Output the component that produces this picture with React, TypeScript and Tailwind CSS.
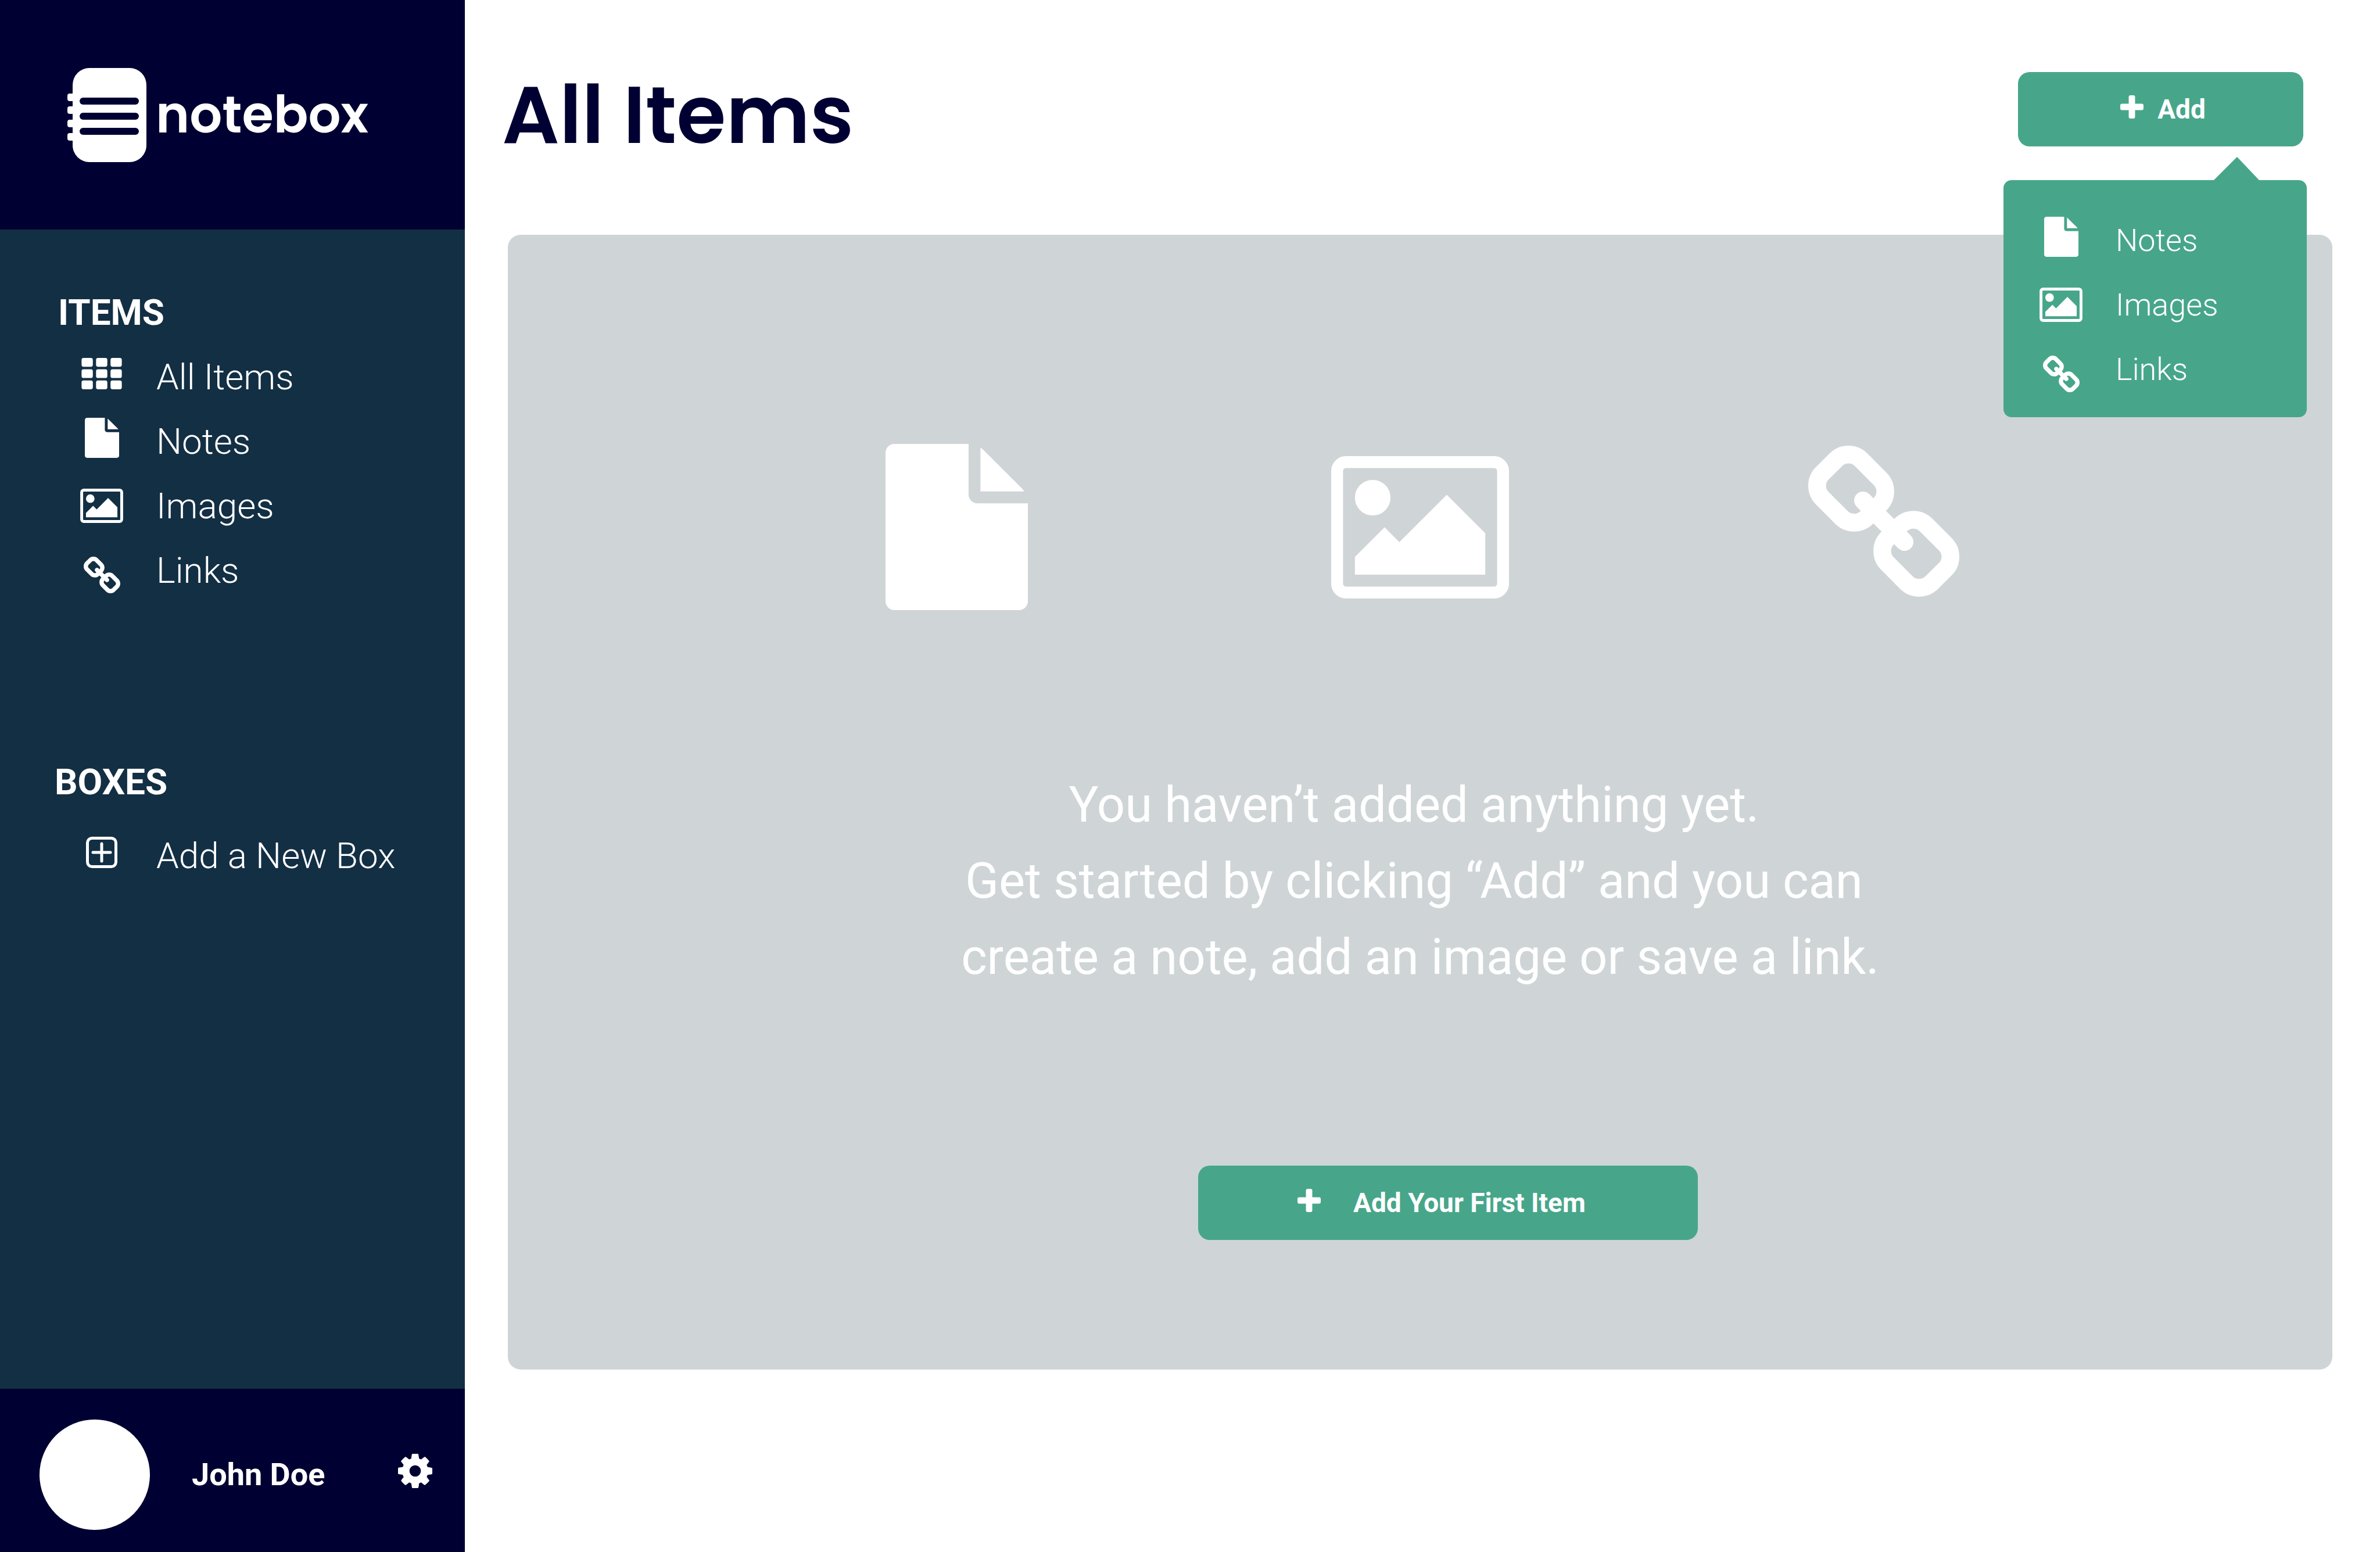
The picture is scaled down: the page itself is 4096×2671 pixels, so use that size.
import type { ReactNode } from "react";

type IconProps = { className?: string };

const FileIcon = ({ className }: IconProps) => (
  <svg viewBox="128 0 1536 1792" fill="currentColor" className={className} aria-hidden="true">
    <path d="M1152 512v-472q22 14 36 28l408 408q14 14 28 36h-472zm-128 32q0 40 28 68t68 28h544v1056q0 40-28 68t-68 28h-1344q-40 0-68-28t-28-68v-1600q0-40 28-68t68-28h800v544z" />
  </svg>
);

const ImageIcon = ({ className }: IconProps) => (
  <svg viewBox="-64 128 1920 1536" fill="currentColor" className={className} aria-hidden="true">
    <path d="M576 576q0 80-56 136t-136 56-136-56-56-136 56-136 136-56 136 56 56 136zm1024 384v448h-1408v-192l320-320 160 160 512-512zm96-704h-1600q-13 0-22.500 9.500t-9.500 22.500v1216q0 13 9.500 22.500t22.500 9.500h1600q13 0 22.500-9.500t9.500-22.500v-1216q0-13-9.500-22.500t-22.500-9.500zm160 32v1216q0 66-47 113t-113 47h-1600q-66 0-113-47t-47-113v-1216q0-66 47-113t113-47h1600q66 0 113 47t47 113z" />
  </svg>
);

const LinkIcon = ({ className }: IconProps) => (
  <svg viewBox="80 16 1632 1632" fill="currentColor" className={className} aria-hidden="true">
    <path d="M1520 1216q0-40-28-68l-208-208q-28-28-68-28-42 0-72 32 3 3 19 18.500t21.500 21.500 15 19 13 25.500 3.500 27.500q0 40-28 68t-68 28q-15 0-27.500-3.500t-25.500-13-19-15-21.500-21.500-18.500-19q-33 31-33 73 0 40 28 68l206 207q27 27 68 27 40 0 68-26l147-146q28-28 28-67zm-703-705q0-40-28-68l-206-207q-28-28-68-28-39 0-68 27l-147 146q-28 28-28 67 0 40 28 68l208 208q27 27 68 27 42 0 72-31-3-3-19-18.500t-21.500-21.500-15-19-13-25.500-3.500-27.500q0-40 28-68t68-28q15 0 27.500 3.500t25.500 13 19 15 21.500 21.500 18.500 19q33-31 33-73zm895 705q0 120-85 203l-147 146q-83 83-203 83-121 0-204-85l-206-207q-83-83-83-203 0-123 88-209l-88-88q-86 88-208 88-120 0-204-84l-208-208q-84-84-84-204t85-203l147-146q83-83 203-83 121 0 204 85l206 207q83 83 83 203 0 123-88 209l88 88q86-88 208-88 120 0 204 84l208 208q84 84 84 204z" />
  </svg>
);

const PlusIcon = ({ className }: IconProps) => (
  <svg viewBox="192 128 1408 1408" fill="currentColor" className={className} aria-hidden="true">
    <path d="M1600 736v192q0 40-28 68t-68 28h-416v416q0 40-28 68t-68 28h-192q-40 0-68-28t-28-68v-416h-416q-40 0-68-28t-28-68v-192q0-40 28-68t68-28h416v-416q0-40 28-68t68-28h192q40 0 68 28t28 68v416h416q40 0 68 28t28 68z" />
  </svg>
);

const GearIcon = ({ className }: IconProps) => (
  <svg viewBox="128 128 1536 1536" fill="currentColor" className={className} aria-hidden="true">
    <path d="M1152 896q0-106-75-181t-181-75-181 75-75 181 75 181 181 75 181-75 75-181zm512-109v222q0 12-8 23t-20 13l-185 28q-19 54-39 91 35 50 107 138 10 12 10 25t-9 23q-27 37-99 108t-94 71q-12 0-26-9l-138-108q-44 23-91 38-16 136-29 186-7 28-36 28h-222q-14 0-24.500-8.500t-11.500-21.500l-28-184q-49-16-90-37l-141 107q-10 9-25 9-14 0-25-11-126-114-165-168-7-10-7-23 0-12 8-23 15-21 51-66.500t54-70.500q-27-50-41-99l-183-27q-13-2-21-12.500t-8-23.500v-222q0-12 8-23t19-13l186-28q14-46 39-92-40-57-107-138-10-12-10-24 0-10 9-23 26-36 98.500-107.500t94.500-71.500q13 0 26 10l138 107q44-23 91-38 16-136 29-186 7-28 36-28h222q14 0 24.500 8.500t11.500 21.500l28 184q49 16 90 37l142-107q9-9 24-9 13 0 25 10 129 119 165 170 7 8 7 22 0 12-8 23-15 21-51 66.500t-54 70.500q26 50 41 98l183 28q13 2 21 12.500t8 23.500z" />
  </svg>
);

const GridIcon = ({ className }: IconProps) => (
  <svg viewBox="0 0 100 78" fill="currentColor" className={className} aria-hidden="true">
    {[0, 28, 56].map((y) =>
      [0, 36, 72].map((x) => <rect key={`${x}-${y}`} x={x} y={y} width="28" height="22" rx="5" />),
    )}
  </svg>
);

const PlusBoxIcon = ({ className }: IconProps) => (
  <svg viewBox="0 0 54 54" fill="none" stroke="currentColor" strokeWidth="5" className={className} aria-hidden="true">
    <rect x="2.5" y="2.5" width="49" height="49" rx="8" />
    <path d="M27 12v30M12 27h30" strokeLinecap="round" />
  </svg>
);

const LogoIcon = ({ className }: IconProps) => (
  <svg viewBox="0 0 136 162" className={className} aria-hidden="true">
    <g fill="#fff">
      <rect x="9" width="127" height="162" rx="29" />
      {[44, 66, 89, 112].map((y) => (
        <rect key={y} y={y} width="24" height="13" rx="4" />
      ))}
    </g>
    <g fill="#000032">
      {[51, 77, 103].map((y) => (
        <rect key={y} x="21" y={y} width="102" height="12" rx="6" />
      ))}
    </g>
  </svg>
);

function NavItem({ icon, children }: { icon: ReactNode; children: ReactNode }) {
  return (
    <a href="#" className="flex h-[111px] items-center text-[62px] leading-[72px] font-light">
      <span className="flex w-[76px] justify-center">{icon}</span>
      <span className="ml-[56px]">{children}</span>
    </a>
  );
}

function MenuItem({ icon, children }: { icon: ReactNode; children: ReactNode }) {
  return (
    <button type="button" role="menuitem" className="flex h-[111px] items-center text-[54px] leading-[64px] font-light">
      <span className="flex w-[76px] justify-center">{icon}</span>
      <span className="ml-[56px]">{children}</span>
    </button>
  );
}

function Sidebar() {
  return (
    <aside className="flex w-[800px] shrink-0 flex-col bg-[#132f44] text-white">
      <div className="flex h-[395px] items-center bg-[#000032] pl-[116px]">
        <LogoIcon className="h-[162px] w-[136px]" />
        <span className="ml-[16px] font-[Poppins,Inter,sans-serif] text-[88px] leading-[112px] font-semibold">notebox</span>
      </div>
      <nav className="flex flex-1 flex-col pt-[104px]">
        <h2 className="pl-[100px] text-[62px] leading-[78px] font-bold">ITEMS</h2>
        <div className="flex flex-col pt-[16px] pl-[137px]">
          <NavItem icon={<GridIcon className="mb-[12px] h-[54px] w-[70px]" />}>All Items</NavItem>
          <NavItem icon={<FileIcon className="mb-[12px] h-[69px] w-[59px]" />}>Notes</NavItem>
          <NavItem icon={<ImageIcon className="h-[59px] w-[74px]" />}>Images</NavItem>
          <NavItem icon={<LinkIcon className="mt-[16px] h-[63px] w-[63px]" />}>Links</NavItem>
        </div>
        <h2 className="mt-[270px] pl-[94px] text-[62px] leading-[78px] font-bold">BOXES</h2>
        <div className="flex flex-col pt-[32px] pl-[137px]">
          <NavItem icon={<PlusBoxIcon className="mb-[12px] h-[54px] w-[54px]" />}>Add a New Box</NavItem>
        </div>
      </nav>
      <footer className="flex h-[281px] items-center bg-[#000032] pt-[14px] pr-[56px] pl-[68px]">
        <span className="size-[190px] rounded-full bg-white" />
        <span className="ml-[72px] text-[54px] leading-[64px] font-bold">John Doe</span>
        <button type="button" aria-label="Settings" className="mb-[12px] ml-auto">
          <GearIcon className="size-[59px]" />
        </button>
      </footer>
    </aside>
  );
}

function AddMenu() {
  return (
    <div className="relative mt-[124px] mr-[132px] w-[491px]">
      <button
        type="button"
        aria-haspopup="menu"
        aria-expanded="true"
        className="flex h-[128px] w-full items-center justify-center gap-[24px] rounded-[20px] bg-[#47a68a] pl-[8px] text-[46px] leading-[56px] font-bold text-white"
      >
        <PlusIcon className="mb-[8px] size-[40px]" />
        Add
      </button>
      <div className="absolute top-[146px] -right-[6px] w-[522px] text-white">
        <svg viewBox="0 0 78 40" className="ml-[362px] h-[40px] w-[78px]" aria-hidden="true">
          <path d="M0 40L40 0l38 40z" fill="#47a68a" />
        </svg>
        <div role="menu" className="flex h-[408px] flex-col rounded-[14px] bg-[#47a68a] pt-[48px] pl-[61px]">
          <MenuItem icon={<FileIcon className="mb-[12px] h-[69px] w-[59px]" />}>Notes</MenuItem>
          <MenuItem icon={<ImageIcon className="h-[59px] w-[74px]" />}>Images</MenuItem>
          <MenuItem icon={<LinkIcon className="mt-[16px] h-[63px] w-[63px]" />}>Links</MenuItem>
        </div>
      </div>
    </div>
  );
}

export default function App() {
  return (
    <div className="flex min-h-screen bg-white font-[Roboto,sans-serif]">
      <Sidebar />
      <main className="flex flex-1 flex-col">
        <header className="flex h-[404px] items-start justify-between pl-[64px]">
          <h1 className="mt-[114px] font-[Poppins,Inter,sans-serif] text-[138px] leading-[168px] font-semibold text-[#000032]">
            All Items
          </h1>
          <AddMenu />
        </header>
        <section className="mr-[82px] ml-[74px] flex flex-col items-center rounded-[22px] bg-[#cfd5d7] pt-[360px] pb-[223px] text-white">
          <div className="grid grid-cols-[repeat(3,798px)] items-center justify-items-center">
            <FileIcon className="h-[286px] w-[245px]" />
            <ImageIcon className="h-[245px] w-[306px]" />
            <LinkIcon className="mb-[20px] h-[260px] w-[260px]" />
          </div>
          <p className="mt-[270px] text-center text-[85px] leading-[131px] whitespace-pre">
            {"You haven’t added anything yet. "}
            <br />
            {"Get started by clicking “Add” and you can "}
            <br />
            create a note, add an image or save a link.
          </p>
          <button
            type="button"
            className="mt-[293px] ml-[96px] flex h-[128px] w-[860px] items-center rounded-[20px] bg-[#47a68a] pl-[171px] text-[46px] leading-[56px] font-bold"
          >
            <PlusIcon className="mb-[8px] size-[40px]" />
            <span className="ml-[56px]">Add Your First Item</span>
          </button>
        </section>
      </main>
    </div>
  );
}
